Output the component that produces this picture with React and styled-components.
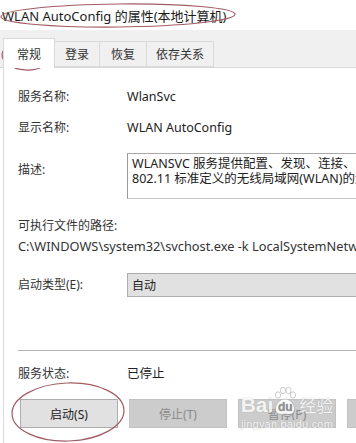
import styled, { createGlobalStyle } from "styled-components";

const GlobalStyle = createGlobalStyle`
  html, body {
    margin: 0;
    padding: 0;
    background: #ffffff;
  }
  body {
    font-family: "Noto Sans", "Noto Sans CJK SC", sans-serif;
    color: #2b2b2b;
  }
`;

const Window = styled.div`
  position: relative;
  width: 356px;
  height: 443px;
  overflow: hidden;
  background: #ffffff;
`;

const Inner = styled.div`
  width: 480px;
`;

const TitleBar = styled.div`
  height: 30px;
  display: flex;
  align-items: center;
  padding-left: 2px;
  font-size: 13px;
  color: #1a1a1a;
  white-space: nowrap;
`;

const TabStrip = styled.div`
  height: 38px;
  background: #f0f0f0;
  display: flex;
  align-items: flex-end;
  padding-left: 3px;
  box-sizing: border-box;
  border-bottom: 1px solid #dadada;
`;

const Tab = styled.div`
  height: ${(p) => (p.$active ? "30px" : "26px")};
  margin-bottom: ${(p) => (p.$active ? "-1px" : "0")};
  padding: 0 ${(p) => p.$pad || 10}px;
  display: flex;
  align-items: center;
  font-size: 12px;
  color: #333;
  background: ${(p) => (p.$active ? "#ffffff" : "#f0f0f0")};
  border: 1px solid #d9d9d9;
  border-bottom: ${(p) => (p.$active ? "none" : "1px solid #d9d9d9")};
  border-left: ${(p) => (p.$first || p.$active ? "1px solid #d9d9d9" : "none")};
  box-sizing: border-box;
  position: relative;
  z-index: ${(p) => (p.$active ? 1 : 0)};
`;

const Panel = styled.div`
  margin-left: 3px;
  border-left: 1px solid #d9d9d9;
  padding: 16px 0 0 14px;
  height: 375px;
  box-sizing: border-box;
  display: flex;
  flex-direction: column;
`;

const Row = styled.div`
  display: flex;
  align-items: ${(p) => (p.$top ? "flex-start" : "center")};
  height: ${(p) => p.$h || 26}px;
  margin-top: ${(p) => p.$mt || 0}px;
`;

const Label = styled.div`
  width: 109px;
  flex: none;
  font-size: 12px;
  line-height: 16px;
  color: #333;
  padding-top: ${(p) => p.$pt || 0}px;
`;

const Value = styled.div`
  font-size: 12.5px;
  line-height: 16px;
  color: #222;
  white-space: nowrap;
`;

const TextBox = styled.div`
  flex: 1;
  height: 46px;
  box-sizing: border-box;
  border: 1px solid #c4c4c4;
  border-left-color: #9a9a9a;
  border-top-color: #a8a8a8;
  padding: 2px 4px;
  font-size: 12.5px;
  line-height: 15px;
  color: #222;
  white-space: nowrap;
  overflow: hidden;
`;

const Line = styled.div`
  font-size: ${(p) => p.$size || 12}px;
  line-height: 16px;
  color: #333;
  white-space: nowrap;
  margin-top: ${(p) => p.$mt || 0}px;
`;

const Combo = styled.div`
  flex: 1;
  height: 24px;
  box-sizing: border-box;
  background: #e1e1e1;
  border: 1px solid #adadad;
  display: flex;
  align-items: center;
  padding-left: 4px;
  font-size: 12px;
  color: #222;
`;

const Separator = styled.div`
  height: 1px;
  background: #b4b4b4;
  margin-top: ${(p) => p.$mt || 0}px;
`;

const ButtonBar = styled.div`
  display: flex;
  gap: 11px;
  margin-top: 17px;
  margin-left: 2px;
`;

const Button = styled.div`
  width: 98px;
  height: 29px;
  box-sizing: border-box;
  display: flex;
  align-items: center;
  justify-content: center;
  font-size: 12px;
  background: ${(p) => (p.$disabled ? "#cccccc" : "#e1e1e1")};
  border: 1px solid ${(p) => (p.$disabled ? "#c2c2c2" : "#adadad")};
  color: ${(p) => (p.$disabled ? "#8a8a8a" : "#222")};
`;

const Marks = styled.svg`
  position: absolute;
  left: 0;
  top: 0;
  pointer-events: none;
`;

const Watermark = styled.div`
  position: absolute;
  left: 239px;
  top: 386px;
  width: 96px;
  display: flex;
  flex-direction: column;
  align-items: center;
  pointer-events: none;
`;

const Brand = styled.div`
  display: flex;
  align-items: flex-end;
  font-family: "Liberation Sans", "Noto Sans CJK SC", sans-serif;
  font-weight: bold;
  font-size: 21px;
  line-height: 22px;
  color: rgba(255, 255, 255, 0.9);
  text-shadow: 0 0 1px rgba(90, 90, 90, 0.4);
`;

const BrandCn = styled.span`
  font-family: "Noto Sans CJK SC", sans-serif;
  font-weight: normal;
  font-size: 17px;
  margin-left: 2px;
`;

const Paw = styled.span`
  position: relative;
  width: 24px;
  height: 30px;
  display: flex;
  align-items: flex-end;
  justify-content: center;
`;

const PawText = styled.span`
  position: relative;
  font-size: 12px;
  line-height: 14px;
  color: #8c8c8c;
  padding-bottom: 2px;
`;

const Domain = styled.div`
  font-family: "Liberation Sans", sans-serif;
  font-size: 11px;
  line-height: 13px;
  margin-top: 2px;
  color: rgba(255, 255, 255, 0.88);
  text-shadow: 0 0 1px rgba(90, 90, 90, 0.35);
  letter-spacing: 0.2px;
`;

export default function App() {
  return (
    <>
      <GlobalStyle />
      <Window>
        <Inner>
          <TitleBar>WLAN AutoConfig 的属性(本地计算机)</TitleBar>
          <TabStrip>
            <Tab $active $first $pad={13}>常规</Tab>
            <Tab $pad={10}>登录</Tab>
            <Tab $pad={11}>恢复</Tab>
            <Tab $pad={9}>依存关系</Tab>
          </TabStrip>
          <Panel>
            <Row>
              <Label>服务名称:</Label>
              <Value>WlanSvc</Value>
            </Row>
            <Row $mt={5}>
              <Label>显示名称:</Label>
              <Value>WLAN AutoConfig</Value>
            </Row>
            <Row $top $h={46} $mt={12}>
              <Label $pt={9}>描述:</Label>
              <TextBox>
                WLANSVC 服务提供配置、发现、连接、断开与 IEEE
                <br />
                802.11 标准定义的无线局域网(WLAN)的连接所需的逻辑。
              </TextBox>
            </Row>
            <Line $mt={19}>可执行文件的路径:</Line>
            <Line $mt={4} $size={12.8}>
              C:\WINDOWS\system32\svchost.exe -k LocalSystemNetworkRestricted
            </Line>
            <Row $h={24} $mt={19}>
              <Label>启动类型(E):</Label>
              <Combo>自动</Combo>
            </Row>
            <Separator $mt={53} />
            <Row $h={16} $mt={15}>
              <Label>服务状态:</Label>
              <Value>已停止</Value>
            </Row>
            <ButtonBar>
              <Button>启动(S)</Button>
              <Button $disabled>停止(T)</Button>
              <Button $disabled>暂停(P)</Button>
              <Button $disabled>恢复(R)</Button>
            </ButtonBar>
          </Panel>
        </Inner>

        <Watermark>
          <Brand>
            Bai
            <Paw>
              <svg
                width="24"
                height="30"
                viewBox="0 0 24 30"
                style={{ position: "absolute", left: 0, top: 0 }}
              >
                <g fill="rgba(255,255,255,0.9)" stroke="rgba(150,150,150,0.6)" strokeWidth="0.8">
                  <ellipse cx="5" cy="9" rx="2.6" ry="3.2" />
                  <ellipse cx="10" cy="4.5" rx="2.6" ry="3.2" />
                  <ellipse cx="15.5" cy="4.5" rx="2.6" ry="3.2" />
                  <ellipse cx="20" cy="9" rx="2.6" ry="3.2" />
                  <path d="M12 13 C6 13 2 19 2.5 24 C3 28 7 29 12 28 C17 29 21 28 21.5 24 C22 19 18 13 12 13 Z" />
                </g>
              </svg>
              <PawText>du</PawText>
            </Paw>
            <BrandCn>经验</BrandCn>
          </Brand>
          <Domain>jingyan.baidu.com</Domain>
        </Watermark>

        <Marks width="356" height="443" viewBox="0 0 356 443">
          <g fill="none" stroke="#a35b63" strokeWidth="1.2">
            <ellipse cx="118" cy="15.5" rx="117" ry="11.5" transform="rotate(-0.6 118 15.5)" />
            <ellipse cx="26" cy="56" rx="24" ry="14" transform="rotate(4 26 56)" />
            <ellipse cx="68" cy="412" rx="56" ry="29" transform="rotate(-2 68 412)" />
          </g>
        </Marks>
      </Window>
    </>
  );
}
